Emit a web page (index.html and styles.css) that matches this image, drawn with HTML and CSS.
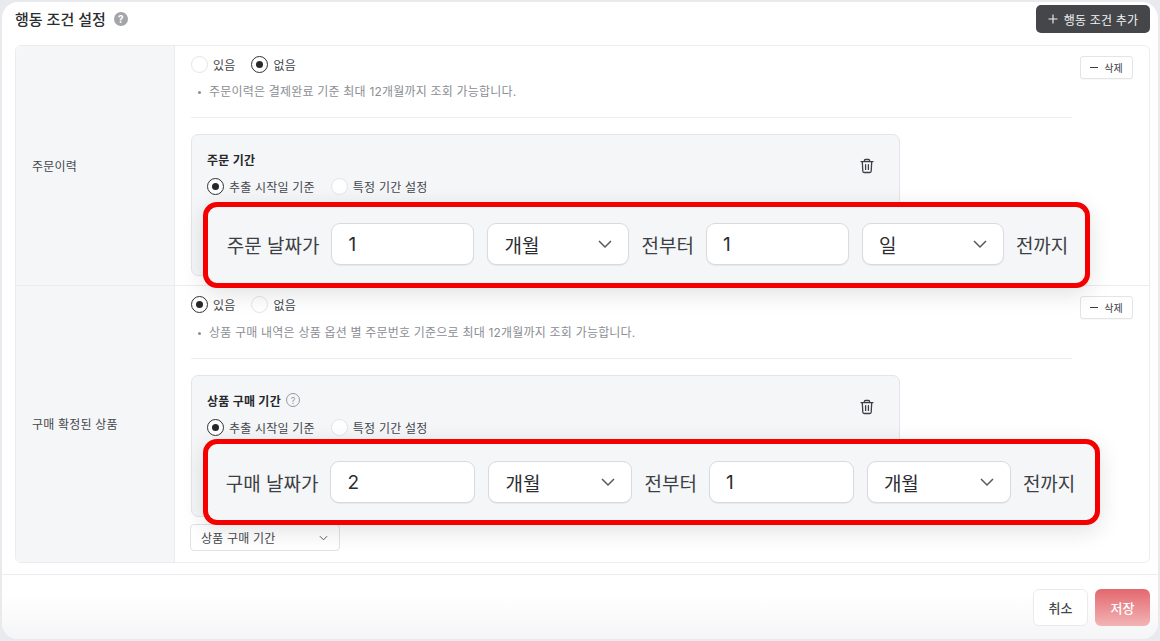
FILE: index.html
```html
<!DOCTYPE html>
<html lang="ko">
<head>
<meta charset="utf-8">
<title>행동 조건 설정</title>
<link rel="stylesheet" href="styles.css">
</head>
<body>
<main class="panel">
  <header class="head">
    <div class="head-title">
      <h1>행동 조건 설정</h1>
      <span class="help-solid">?</span>
    </div>
    <button class="add-btn"><svg class="add-plus" viewBox="0 0 10 10" fill="none" stroke="#f2f2f3" stroke-width="1.1"><path d="M5 .5v9M.5 5h9"/></svg>행동 조건 추가</button>
  </header>

  <section class="table">
    <div class="row row-a">
      <div class="row-label">주문이력</div>
      <div class="row-body">
        <div class="main">
          <div class="radios">
            <label class="radio"><i class="dot"></i>있음</label>
            <label class="radio"><i class="dot on"></i>없음</label>
          </div>
          <p class="note"><span class="bullet"></span>주문이력은 결제완료 기준 최대 12개월까지 조회 가능합니다.</p>
          <hr class="rule">
          <div class="card">
            <div class="card-title"><b>주문 기간</b></div>
            <div class="radios radios-card">
              <label class="radio"><i class="dot on"></i>추출 시작일 기준</label>
              <label class="radio"><i class="dot"></i>특정 기간 설정</label>
            </div>
            <svg class="trash" viewBox="0 0 16 16" fill="none" stroke="#3c3f44" stroke-width="1.3" stroke-linecap="round" stroke-linejoin="round"><path d="M2 3.6h12M5.4 3.4V2.6c0-.7.4-1.1 1-1.1h3.2c.6 0 1 .4 1 1.1v.8M3.3 3.8l.5 9.2c0 .9.6 1.5 1.4 1.5h5.6c.8 0 1.4-.6 1.4-1.5l.5-9.2M6.6 6.6v4.8M9.4 6.6v4.8"/></svg>
          </div>
        </div>
        <button class="del-btn"><span class="minus"></span>삭제</button>
      </div>
      <div class="callout callout-a">
        <span class="call-text">주문 날짜가</span>
        <input class="field" value="1" readonly>
        <div class="sel">개월<svg viewBox="0 0 16 10" fill="none" stroke="#55585e" stroke-width="1.5"><path d="M2 2l6 6 6-6"/></svg></div>
        <span class="call-text">전부터</span>
        <input class="field" value="1" readonly>
        <div class="sel">일<svg viewBox="0 0 16 10" fill="none" stroke="#55585e" stroke-width="1.5"><path d="M2 2l6 6 6-6"/></svg></div>
        <span class="call-text">전까지</span>
      </div>
    </div>

    <div class="row row-b">
      <div class="row-label">구매 확정된 상품</div>
      <div class="row-body">
        <div class="main">
          <div class="radios">
            <label class="radio"><i class="dot on"></i>있음</label>
            <label class="radio"><i class="dot"></i>없음</label>
          </div>
          <p class="note"><span class="bullet"></span>상품 구매 내역은 상품 옵션 별 주문번호 기준으로 최대 12개월까지 조회 가능합니다.</p>
          <hr class="rule">
          <div class="card">
            <div class="card-title"><b>상품 구매 기간</b><span class="help-line">?</span></div>
            <div class="radios radios-card">
              <label class="radio"><i class="dot on"></i>추출 시작일 기준</label>
              <label class="radio"><i class="dot"></i>특정 기간 설정</label>
            </div>
            <svg class="trash" viewBox="0 0 16 16" fill="none" stroke="#3c3f44" stroke-width="1.3" stroke-linecap="round" stroke-linejoin="round"><path d="M2 3.6h12M5.4 3.4V2.6c0-.7.4-1.1 1-1.1h3.2c.6 0 1 .4 1 1.1v.8M3.3 3.8l.5 9.2c0 .9.6 1.5 1.4 1.5h5.6c.8 0 1.4-.6 1.4-1.5l.5-9.2M6.6 6.6v4.8M9.4 6.6v4.8"/></svg>
          </div>
          <div class="small-sel">상품 구매 기간<svg viewBox="0 0 10 6" fill="none" stroke="#55585e" stroke-width="1.1"><path d="M1 1l4 4 4-4"/></svg></div>
        </div>
        <button class="del-btn"><span class="minus"></span>삭제</button>
      </div>
      <div class="callout callout-b">
        <span class="call-text">구매 날짜가</span>
        <input class="field" value="2" readonly>
        <div class="sel">개월<svg viewBox="0 0 16 10" fill="none" stroke="#55585e" stroke-width="1.5"><path d="M2 2l6 6 6-6"/></svg></div>
        <span class="call-text">전부터</span>
        <input class="field" value="1" readonly>
        <div class="sel">개월<svg viewBox="0 0 16 10" fill="none" stroke="#55585e" stroke-width="1.5"><path d="M2 2l6 6 6-6"/></svg></div>
        <span class="call-text">전까지</span>
      </div>
    </div>
  </section>

  <footer class="foot">
    <button class="btn-cancel">취소</button>
    <button class="btn-save">저장</button>
  </footer>
</main>
</body>
</html>
```

FILE: styles.css
```css
* { box-sizing: border-box; }
html, body { margin: 0; height: 100%; }
body {
  width: 1160px;
  height: 641px;
  overflow: hidden;
  background: #e9eaee;
  font-family: "Inter", "Noto Sans CJK KR", sans-serif;
  color: #33363b;
}
.panel {
  width: 1160px;
  height: 641px;
  background: #fff;
  border: 2px solid #e9eaee;
  border-radius: 18px;
  padding: 0 8px 0 13px;
  display: flex;
  flex-direction: column;
  overflow: hidden;
}
.head {
  height: 43px;
  display: flex;
  justify-content: space-between;
  align-items: flex-start;
  flex: none;
}
.head-title { display: flex; align-items: center; gap: 8px; height: 33px; }
.head h1 { margin: 0; font-size: 15px; font-weight: 500; color: #2b2d31; }
.help-solid {
  width: 14px; height: 14px; border-radius: 50%;
  background: #a3a5a9; color: #fff; font-size: 10px; font-weight: 700;
  display: flex; align-items: center; justify-content: center;
}
.add-btn {
  margin-top: 3px;
  width: 114px; height: 28px;
  background: #45464a;
  border: 0; border-radius: 5px;
  color: #f2f2f3;
  font: 400 12px "Inter", "Noto Sans CJK KR", sans-serif;
  letter-spacing: .2px;
  display: flex; align-items: center; justify-content: center; gap: 6px;
}
.add-plus { width: 10px; height: 10px; }
.table {
  width: 1135px;
  height: 518px;
  flex: none;
  border: 1px solid #ebecef;
  border-radius: 6px;
}
.row { display: flex; position: relative; }
.row-a { height: 239px; }
.row-b { height: 277px; border-top: 1px solid #ebecef; }
.row-label {
  width: 159px;
  flex: none;
  background: #f5f6f8;
  border-right: 1px solid #ebecef;
  display: flex; align-items: center;
  padding-left: 16px;
  font-size: 12px;
  letter-spacing: .2px;
  color: #44474c;
}
.row-a .row-label { border-top-left-radius: 6px; }
.row-b .row-label { border-bottom-left-radius: 6px; padding-bottom: 2px; }
.row-body { flex: 1; display: flex; padding-left: 16px; align-items: flex-start; }
.main { width: 881px; flex: none; padding-top: 9px; }
.radios { display: flex; gap: 16px; height: 18px; align-items: center; }
.radio { display: flex; align-items: center; gap: 5px; font-size: 12px; letter-spacing: .2px; color: #44474c; }
.dot {
  width: 17px; height: 17px; border-radius: 50%;
  background: #fff; border: 1px solid #e3e4e8; position: relative; flex: none;
}
.dot.on { border: 1.5px solid #2f3135; }
.dot.on::after {
  content: ""; position: absolute; left: 50%; top: 50%;
  width: 7px; height: 7px; margin: -3.5px 0 0 -3.5px;
  border-radius: 50%; background: #26282b;
}
.note {
  margin: 10px 0 0;
  height: 18px;
  line-height: 18px;
  font-size: 12px;
  letter-spacing: .2px;
  color: #8b8e94;
  display: flex; align-items: center;
  padding-left: 7px;
}
.row-b .note { margin-top: 11px; }
.bullet { width: 3px; height: 3px; border-radius: 50%; background: #8b8e94; margin-right: 8px; flex: none; }
.rule { margin: 16px 0 0; border: 0; border-top: 1px solid #ebecef; }
.card {
  margin-top: 16px;
  width: 709px;
  height: 142px;
  background: #f5f6f8;
  border: 1px solid #e4e5e9;
  border-radius: 7px;
  padding: 15px 15px;
  position: relative;
}
.card-title { display: flex; align-items: center; gap: 5px; height: 18px; font-size: 12px; letter-spacing: .25px; color: #26282b; }
.card-title b { font-weight: 700; }
.help-line {
  width: 14px; height: 14px; border: 1px solid #96989d; border-radius: 50%;
  color: #96989d; font-size: 9px; letter-spacing: 0; display: flex; align-items: center; justify-content: center;
}
.radios-card { margin-top: 9px; }
.trash { position: absolute; right: 24px; top: 23px; width: 16px; height: 16px; }
.del-btn {
  margin: 10px 0 0 8px;
  width: 53px; height: 23px;
  background: #fff;
  border: 1px solid #e3e4e8; border-radius: 3px;
  font: 400 10px "Inter", "Noto Sans CJK KR", sans-serif;
  color: #3a3d42;
  display: flex; align-items: center; justify-content: center; gap: 6px;
  box-shadow: 0 1px 1px rgba(0,0,0,.03);
}
.minus { width: 8px; height: 1.3px; background: #3a3d42; }
.small-sel {
  margin: 7px 0 0 -1px;
  width: 150px; height: 27px;
  background: #fff;
  border: 1px solid #e1e2e6; border-radius: 4px;
  display: flex; align-items: center; justify-content: space-between;
  padding: 0 11px 0 10px;
  font-size: 12px; letter-spacing: .2px; color: #44474c;
}
.small-sel svg { width: 9px; height: 6px; }
.callout {
  position: absolute;
  z-index: 2;
  left: 187px;
  height: 86px;
  background: #f5f6f8;
  border: 5px solid #f40000;
  border-radius: 14px;
  box-shadow: 0 6px 22px rgba(30,30,40,.13);
  display: flex; align-items: center; justify-content: center; gap: 12px;
}
.callout-a { top: 156px; width: 887px; padding: 0 0 2px 2px; }
.callout-b { top: 153px; width: 897px; padding-right: 2px; }
.call-text { font-size: 19px; color: #3c3f44; white-space: nowrap; }
.field, .sel {
  height: 42px;
  background: #fff;
  border: 1px solid #d9dade;
  border-radius: 9px;
  box-shadow: 0 1px 1px rgba(0,0,0,.06);
  font: 400 19px "Inter", "Noto Sans CJK KR", sans-serif;
  color: #2b2d31;
}
.field { padding: 0 16px; outline: none; margin-right: 1px; }
.sel {
  display: flex; align-items: center; justify-content: space-between;
  padding: 0 15px 0 16px;
}
.sel svg { width: 16px; height: 10px; }
.callout-a .field { width: 143px; }
.callout-a .sel { width: 142px; }
.callout-b .field { width: 145px; }
.callout-b .sel { width: 144px; }
.foot {
  margin: 11px -8px 0 -13px;
  flex: 1;
  border-top: 1px solid #ebecef;
  background: linear-gradient(#fff 30%, #f5f5f7);
  display: flex; justify-content: flex-end; align-items: flex-start; gap: 7px;
  padding: 14px 8px 0 0;
}
.btn-cancel, .btn-save {
  width: 55px; height: 37px; border-radius: 6px;
  font: 500 13px "Inter", "Noto Sans CJK KR", sans-serif;
}
.btn-cancel { background: #fff; border: 1px solid #e9eaed; color: #44474c; }
.btn-save { background: linear-gradient(#e3686e, #f2b4b6); border: 0; color: #fff; }
```
